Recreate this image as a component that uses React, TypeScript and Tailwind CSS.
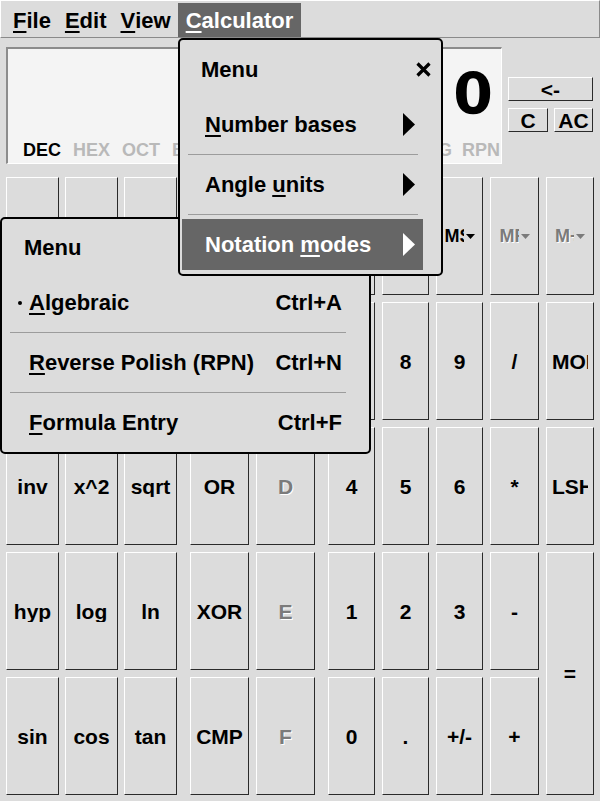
import React from "react";

type K = { l: string; off?: boolean; tall?: boolean; memo?: boolean };

// keys under the open menus are left without labels (they are covered)
const groupA: K[] = [
  { l: "" }, { l: "" }, { l: "" },
  { l: "" }, { l: "" }, { l: "" },
  { l: "inv" }, { l: "x^2" }, { l: "sqrt" },
  { l: "hyp" }, { l: "log" }, { l: "ln" },
  { l: "sin" }, { l: "cos" }, { l: "tan" },
];

const groupB: K[] = [
  { l: "" }, { l: "", off: true },
  { l: "" }, { l: "", off: true },
  { l: "OR" }, { l: "D", off: true },
  { l: "XOR" }, { l: "E", off: true },
  { l: "CMP" }, { l: "F", off: true },
];

const groupC: K[] = [
  { l: "" }, { l: "" }, { l: "MS", memo: true }, { l: "MR", memo: true, off: true }, { l: "M+", memo: true, off: true },
  { l: "" }, { l: "8" }, { l: "9" }, { l: "/" }, { l: "MOD" },
  { l: "4" }, { l: "5" }, { l: "6" }, { l: "*" }, { l: "LSH" },
  { l: "1" }, { l: "2" }, { l: "3" }, { l: "-" }, { l: "=", tall: true },
  { l: "0" }, { l: "." }, { l: "+/-" }, { l: "+" },
];

const raised = "bg-[#dcdcdc] border border-t-white border-l-white border-r-[#2a2a2a] border-b-[#2a2a2a]";
const dim = "text-[#7b7b7b] [text-shadow:1px_1px_0_#ffffff]";

function Key({ k }: { k: K }) {
  return (
    <div className={`${raised} flex items-center justify-center ${k.tall ? "row-span-2" : ""} ${k.off ? dim : ""}`}>
      {k.memo ? (
        <div className="flex items-center text-[18px] leading-none">
          <span className="w-[19px] overflow-hidden whitespace-nowrap">{k.l}</span>
          <svg width="9" height="5" className="ml-[2px]">
            <polygon points="0,0 9,0 4.5,5" fill="currentColor" />
          </svg>
        </div>
      ) : (
        <div className="w-full px-[5px]">
          <div className="overflow-hidden whitespace-nowrap text-center text-[21px] leading-none">{k.l}</div>
        </div>
      )}
    </div>
  );
}

function Arrow({ white }: { white?: boolean }) {
  return (
    <svg width="12" height="23" viewBox="0 0 12 23">
      <polygon points="0,0 12,11.5 0,23" fill={white ? "#ffffff" : "#000000"} />
    </svg>
  );
}

function Sep() {
  return <div className="h-px bg-[#9c9c9c] ml-[8px] mr-[23px]" />;
}

function U({ children }: { children: React.ReactNode }) {
  return <span className="underline decoration-[1.5px] underline-offset-[3px]">{children}</span>;
}

export default function App() {
  return (
    <div className="relative w-[600px] h-[801px] overflow-hidden bg-[#dcdcdc] text-black font-bold font-['Liberation_Sans',Arial,sans-serif]">
      {/* menubar */}
      <div className="h-[38px] flex items-start pt-[2px] pl-[5px] border border-t-white border-l-white border-r-[#8a8a8a] border-b-[#8a8a8a] text-[22px]">
        <div className="h-[34px] px-[7px] flex items-center"><U>F</U>ile</div>
        <div className="h-[34px] px-[7px] flex items-center"><U>E</U>dit</div>
        <div className="h-[34px] px-[7px] flex items-center"><U>V</U>iew</div>
        <div className="h-[34px] px-[8px] flex items-center bg-[#666666] text-white"><U>C</U>alculator</div>
      </div>

      {/* display + edit keys */}
      <div className="h-[139px] flex pl-[6px] pt-[9px]">
        <div className="w-[496px] h-[117px] flex flex-col bg-[#f4f4f4] border-t-2 border-l-2 border-t-[#8c8c8c] border-l-[#8c8c8c] border-b border-r border-b-white border-r-white">
          <div className="text-right text-[57px] leading-[57px] pr-[8px] pt-[17px] font-['DejaVu_Sans',sans-serif]">0</div>
          <div className="mt-auto flex justify-between pl-[15px] pr-[1px] pb-[4px] text-[18px] leading-[18px] text-[#b9b9b9]">
            <div className="flex gap-[12px]">
              <span className="text-black">DEC</span>
              <span>HEX</span>
              <span>OCT</span>
              <span>BIN</span>
            </div>
            <div className="flex gap-[10px]">
              <span>RAD</span>
              <span>DEG</span>
              <span>RPN</span>
            </div>
          </div>
        </div>
        <div className="ml-[6px] w-[85px] pt-[30px] flex flex-col gap-[7px] text-[21px] leading-none">
          <div className={`${raised} h-[24px] flex items-center justify-center`}>&lt;-</div>
          <div className="flex gap-[6px]">
            <div className={`${raised} w-[40px] h-[24px] flex items-center justify-center`}>C</div>
            <div className={`${raised} w-[39px] h-[24px] flex items-center justify-center`}>AC</div>
          </div>
        </div>
      </div>

      {/* keypad */}
      <div className="flex pl-[6px] gap-[13px]">
        <div className="grid grid-cols-[53px_53px_53px] grid-rows-[repeat(5,118px)] gap-x-[6px] gap-y-[7px]">
          {groupA.map((k, i) => <Key key={i} k={k} />)}
        </div>
        <div className="grid grid-cols-[59px_59px] grid-rows-[repeat(5,118px)] gap-x-[7px] gap-y-[7px]">
          {groupB.map((k, i) => <Key key={i} k={k} />)}
        </div>
        <div className="grid grid-cols-[47px_47px_47px_49px_48px] grid-rows-[repeat(5,118px)] gap-x-[7px] gap-y-[7px]">
          {groupC.map((k, i) => <Key key={i} k={k} />)}
        </div>
      </div>

      {/* Notation modes submenu (under the main menu) */}
      <div className="absolute left-0 top-[217px] w-[371px] h-[237px] flex flex-col bg-[#dcdcdc] border-2 border-black rounded-[5px] text-[22px]">
        <div className="h-[54px] pt-[2px] pl-[22px] flex items-center">Menu</div>
        <div className="h-[59px] flex items-center pl-[2px] pr-[18px]">
          <div className="h-[51px] w-full flex items-center pr-[9px]">
            <div className="w-[25px] flex items-center">
              <div className="ml-[14px] mt-[1px] w-[4px] h-[4px] rounded-full bg-black" />
            </div>
            <span className="flex-1"><U>A</U>lgebraic</span>
            <span>Ctrl+A</span>
          </div>
        </div>
        <Sep />
        <div className="h-[59px] flex items-center pl-[2px] pr-[18px]">
          <div className="h-[51px] w-full flex items-center pl-[25px] pr-[9px]">
            <span className="flex-1"><U>R</U>everse Polish (RPN)</span>
            <span>Ctrl+N</span>
          </div>
        </div>
        <Sep />
        <div className="h-[59px] flex items-center pl-[2px] pr-[18px]">
          <div className="h-[51px] w-full flex items-center pl-[25px] pr-[9px]">
            <span className="flex-1"><U>F</U>ormula Entry</span>
            <span>Ctrl+F</span>
          </div>
        </div>
      </div>

      {/* Calculator menu */}
      <div className="absolute left-[178px] top-[38px] w-[265px] h-[238px] flex flex-col bg-[#dcdcdc] border-2 border-black rounded-[5px] text-[22px]">
        <div className="h-[55px] pt-[3px] pl-[21px] pr-[10px] flex items-center justify-between">
          <span>Menu</span>
          <svg width="15" height="15" viewBox="0 0 15 15">
            <path d="M1.5 1.5 L13.5 13.5 M13.5 1.5 L1.5 13.5" stroke="#000" strokeWidth="3.2" />
          </svg>
        </div>
        <div className="h-[59px] flex items-center pl-[2px] pr-[18px]">
          <div className="h-[51px] w-full flex items-center pl-[23px] pr-[8px]">
            <span className="flex-1"><U>N</U>umber bases</span>
            <Arrow />
          </div>
        </div>
        <Sep />
        <div className="h-[59px] flex items-center pl-[2px] pr-[18px]">
          <div className="h-[51px] w-full flex items-center pl-[23px] pr-[8px]">
            <span className="flex-1">Angle <U>u</U>nits</span>
            <Arrow />
          </div>
        </div>
        <Sep />
        <div className="h-[59px] flex items-center pl-[2px] pr-[18px]">
          <div className="h-[51px] w-full flex items-center pl-[23px] pr-[8px] bg-[#666666] text-white">
            <span className="flex-1">Notation <U>m</U>odes</span>
            <Arrow white />
          </div>
        </div>
      </div>
    </div>
  );
}
